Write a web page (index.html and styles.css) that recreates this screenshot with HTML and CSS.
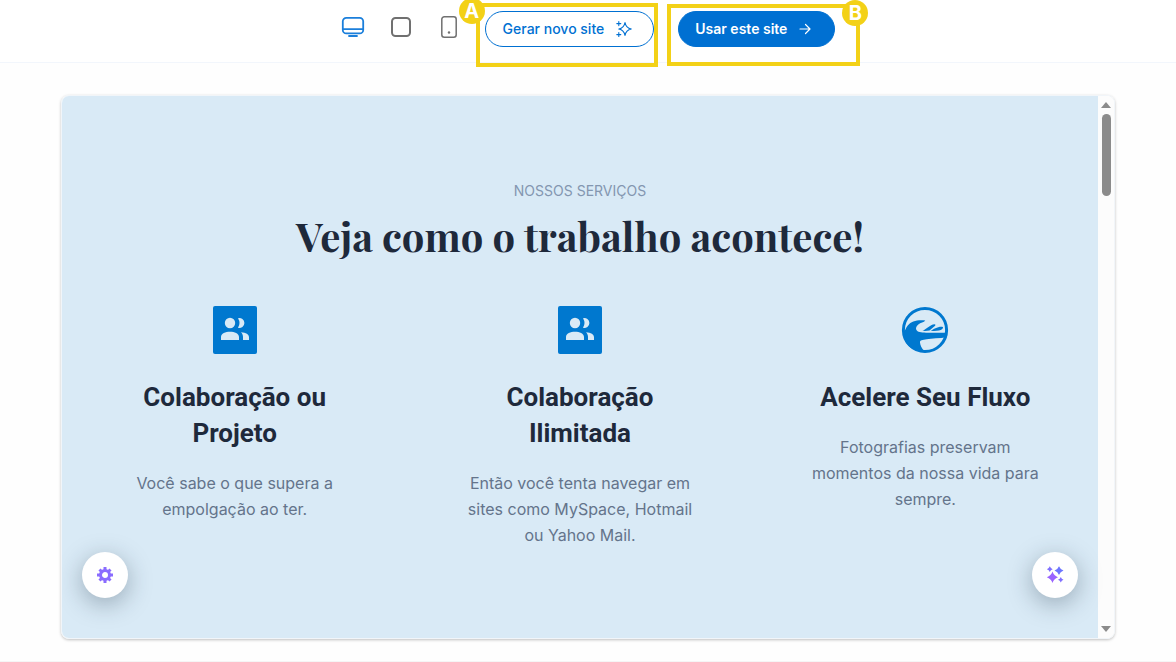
FILE: index.html
```html
<!DOCTYPE html>
<html lang="pt-BR">
<head>
    <meta charset="UTF-8">
    <meta name="viewport" content="width=device-width, initial-scale=1.0">
    <title>Gerar novo site</title>
    <link rel="stylesheet" href="styles.css">
</head>
<body>
    <header class="toolbar">
        <button class="device active" aria-label="Desktop">
            <svg width="24" height="24" viewBox="0 0 24 24" fill="none" stroke="currentColor" stroke-width="1.8" stroke-linecap="round">
                <rect x="1.8" y="2.8" width="20.4" height="15.6" rx="3.5"/>
                <path d="M2 14.2h20M8 21h8"/>
            </svg>
        </button>
        <button class="device" aria-label="Tablet">
            <svg width="24" height="24" viewBox="0 0 24 24" fill="none" stroke="currentColor" stroke-width="2">
                <rect x="3" y="3" width="18" height="18" rx="3.5"/>
            </svg>
        </button>
        <button class="device" aria-label="Celular">
            <svg width="24" height="24" viewBox="0 0 24 24" fill="none" stroke="currentColor" stroke-width="1.5">
                <rect x="4.8" y="1.8" width="14.4" height="20.4" rx="2.5"/>
                <circle cx="12" cy="17.5" r="1.2" fill="currentColor" stroke="none"/>
            </svg>
        </button>

        <div class="action">
            <button class="btn btn-outline">
                Gerar novo site
                <svg width="16" height="16" viewBox="0 0 16 16" fill="none" stroke="currentColor" stroke-width="1.1" stroke-linecap="round" stroke-linejoin="round">
                    <path d="M9 1.6Q10 7 15.3 8Q10 9 9 14.4Q8 9 2.8 8Q8 7 9 1.6Z"/>
                    <path d="M2.8 .6v4M.8 2.6h4M2.8 11.6v4M.8 13.6h4"/>
                </svg>
            </button>
            <div class="highlight highlight-a"><span class="badge">A</span></div>
        </div>

        <div class="action">
            <button class="btn btn-primary">
                Usar este site
                <svg width="12" height="12" viewBox="0 0 12 12" fill="none" stroke="currentColor" stroke-width="1.2" stroke-linecap="round" stroke-linejoin="round">
                    <path d="M1 6h10M6.5 1.5L11 6l-4.500 4.500"/>
                </svg>
            </button>
            <div class="highlight highlight-b"><span class="badge">B</span></div>
        </div>
    </header>

    <main class="stage">
        <div class="preview">
            <section class="services">
                <p class="eyebrow">NOSSOS SERVIÇOS</p>
                <h1>Veja como o trabalho acontece!</h1>
                <div class="service-list">
                    <article class="service">
                        <svg class="service-icon" width="48" height="48" viewBox="0 0 48 48">
                            <rect x="2" width="44" height="48" rx="2" fill="#0078cf"/>
                            <g fill="#d9eaf6">
                                <circle cx="19" cy="17" r="5.200"/>
                                <path d="M27 12.200a5 5 0 1 1 0 9.600q3-4.800 0-9.600Z"/>
                                <path d="M10 34v-3c0-7 18-7 18 0v3ZM30 26.200c5 .3 8 2 8 5V34h-6v-3c0-2-.6-3.500-2-4.800Z"/>
                            </g>
                        </svg>
                        <h2>Colaboração ou Projeto</h2>
                        <p>Você sabe o que supera a empolgação ao ter.</p>
                    </article>
                    <article class="service">
                        <svg class="service-icon" width="48" height="48" viewBox="0 0 48 48">
                            <rect x="2" width="44" height="48" rx="2" fill="#0078cf"/>
                            <g fill="#d9eaf6">
                                <circle cx="19" cy="17" r="5.200"/>
                                <path d="M27 12.200a5 5 0 1 1 0 9.600q3-4.800 0-9.600Z"/>
                                <path d="M10 34v-3c0-7 18-7 18 0v3ZM30 26.200c5 .3 8 2 8 5V34h-6v-3c0-2-.6-3.500-2-4.800Z"/>
                            </g>
                        </svg>
                        <h2>Colaboração Ilimitada</h2>
                        <p>Então você tenta navegar em sites como MySpace, Hotmail ou Yahoo Mail.</p>
                    </article>
                    <article class="service">
                        <svg class="service-icon" width="48" height="48" viewBox="0 0 48 48">
                            <circle cx="24" cy="24" r="21.600" fill="none" stroke="#0078cf" stroke-width="3"/>
                            <path fill="#0078cf" d="M3 27C5 21 8 17 12.300 15.500C16 14 21 13.800 24.300 14.600C23 16.500 19.500 16.500 17.300 18.500C15.500 20 14.500 22 15.300 23.800C16.500 26 20 26.700 25 26.700H46V31.300C38 32.600 31 32.300 25.700 33.200C21.500 33.900 18.800 34 19 36.500C19.200 39 20.500 42 23.500 45.500C12 46 2 38 3 27Z"/>
                            <path fill="#0078cf" d="M21.500 24.800C25 23.600 29 18.600 33.500 18.200Q35.500 18.500 33.200 20.500L28.500 24.500Q25 25.200 21.500 24.800Z"/>
                            <path fill="#0078cf" d="M29.500 24.800C33 23.300 36 20.600 41 20.800Q43.200 21.300 41 23.300Q38.500 25.300 29.500 24.800Z"/>
                        </svg>
                        <h2>Acelere Seu Fluxo</h2>
                        <p>Fotografias preservam momentos da nossa vida para sempre.</p>
                    </article>
                </div>
            </section>

            <div class="scrollbar" aria-hidden="true">
                <span class="arrow arrow-up"></span>
                <span class="thumb"></span>
                <span class="arrow arrow-down"></span>
            </div>

            <button class="fab fab-left" aria-label="Configurações">
                <svg width="18" height="18" viewBox="0 0 18 18">
                    <g stroke="#8a6cff" stroke-width="3">
                        <path d="M9 1v16M1 9h16M3.500 3.500l11 11M14.500 3.500l-11 11"/>
                    </g>
                    <circle cx="9" cy="9" r="4.500" fill="#fff" stroke="#8a6cff" stroke-width="3"/>
                </svg>
            </button>
            <button class="fab fab-right" aria-label="Gerar com IA">
                <svg width="18" height="18" viewBox="0 0 18 18">
                    <path fill="#9a63ff" d="M6.500 5.500Q7.800 9.700 12 11.200Q7.800 12.700 6.500 17Q5.100 12.700 .8 11.200Q5.100 9.700 6.500 5.500Z"/>
                    <path fill="#6c75ff" d="M13 .3Q14.200 3.400 17.500 4.500Q14.200 5.600 13 9Q11.800 5.600 8.500 4.500Q11.800 3.400 13 .3Z"/>
                    <path fill="#8070ff" d="M3.800 .3Q4.600 2.400 6.700 3.200Q4.600 4 3.800 6Q3 4 .9 3.200Q3 2.400 3.800 .3Z"/>
                    <path fill="#8070ff" d="M14.800 11Q15.500 13 17.500 13.700Q15.500 14.400 14.800 16.500Q14.100 14.400 12 13.700Q14.100 13 14.800 11Z"/>
                </svg>
            </button>
        </div>
    </main>
</body>
</html>
```
FILE: styles.css
```css
* {
    margin: 0;
    padding: 0;
    box-sizing: border-box;
}

body {
    font-family: Inter, "Liberation Sans", sans-serif;
    background-color: #fefefe;
    color: #1e293b;
}

button {
    font-family: inherit;
    cursor: pointer;
}

.toolbar {
    display: flex;
    justify-content: center;
    gap: 24px;
    padding: 11px 24px 15px;
    background-color: #fff;
    border-bottom: 1px solid #f2f6fc;
}

.device {
    display: flex;
    align-items: center;
    height: 32px;
    border: none;
    background: none;
    color: #707070;
}

.device.active {
    color: #1b7fdb;
}

.action {
    position: relative;
}

.btn {
    display: flex;
    align-items: center;
    gap: 12px;
    height: 36px;
    padding-bottom: 1px;
    border: 1px solid #0070d2;
    border-radius: 18px;
    font-size: 14px;
    white-space: nowrap;
}

.btn-outline {
    padding-left: 17px;
    padding-right: 21px;
    background-color: #fff;
    color: #0070d2;
    font-weight: 500;
}

.btn-primary {
    padding-left: 16px;
    padding-right: 23px;
    background-color: #0070d2;
    color: #fff;
    font-weight: 600;
}

/* Yellow callouts drawn over the toolbar */
.highlight {
    position: absolute;
    border: 4px solid #f3d117;
    pointer-events: none;
}

.highlight-a {
    inset: -8px -4px -20px -9px;
}

.highlight-b {
    inset: -7px -25px -19px -11px;
}

.badge {
    position: absolute;
    width: 26px;
    height: 26px;
    border-radius: 50%;
    background-color: #f3d117;
    color: #fff;
    font-size: 20px;
    font-weight: 700;
    line-height: 26px;
    text-align: center;
}

.highlight-a .badge {
    top: -9px;
    left: -21px;
}

.highlight-b .badge {
    top: -8px;
    right: -12px;
}

.stage {
    padding: 32px 61px 22px;
    border-bottom: 1px solid #f5f5f5;
}

.preview {
    position: relative;
    display: flex;
    border: 1px solid #f1f5f9;
    border-radius: 8px;
    overflow: hidden;
    box-shadow: 0 1px 3px rgba(0, 0, 0, 0.25);
}

.services {
    flex: 1;
    padding: 84px 0 90px;
    background-color: #d9eaf6;
    text-align: center;
}

.eyebrow {
    color: #8396b0;
    font-size: 14px;
    line-height: 22px;
}

h1 {
    margin: 8px 0 44px;
    font-family: "Playfair Display", "Liberation Serif", serif;
    font-size: 40px;
    font-weight: 700;
    line-height: 52px;
}

.service-list {
    display: grid;
    grid-template-columns: repeat(3, 1fr);
}

.service {
    padding: 0 52px;
}

.service-icon {
    display: block;
    margin: 0 auto;
}

.service h2 {
    margin: 25px 0 19px;
    font-family: Roboto, sans-serif;
    font-size: 26px;
    font-weight: 700;
    line-height: 36px;
}

.service p {
    color: #64748b;
    font-size: 16px;
    line-height: 26px;
}

.scrollbar {
    display: flex;
    flex-direction: column;
    align-items: center;
    width: 16px;
    padding: 6px 0;
    background-color: #fcfcfc;
}

.arrow {
    border: 5px solid transparent;
}

.arrow-up {
    border-top: none;
    border-bottom: 6px solid #8b8b8b;
}

.arrow-down {
    margin-top: auto;
    border-bottom: none;
    border-top: 6px solid #8b8b8b;
}

.thumb {
    width: 9px;
    height: 82px;
    margin-top: 6px;
    border-radius: 5px;
    background-color: #8b8b8b;
}

.fab {
    position: absolute;
    bottom: 40px;
    display: flex;
    align-items: center;
    justify-content: center;
    width: 46px;
    height: 46px;
    border: none;
    border-radius: 50%;
    background-color: #fff;
    box-shadow: 0 6px 24px rgba(30, 50, 65, 0.35);
}

.fab-left {
    left: 20px;
}

.fab-right {
    right: 36px;
}
```
